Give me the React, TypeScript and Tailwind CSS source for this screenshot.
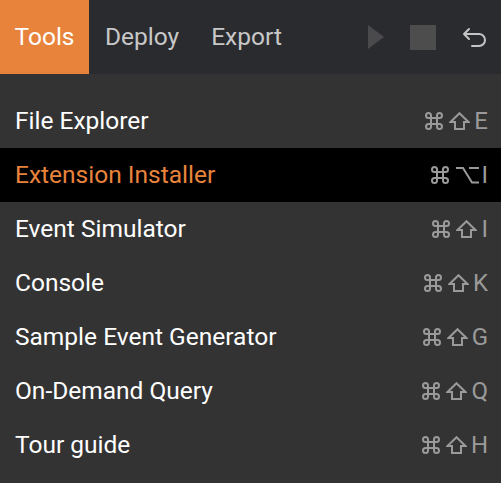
import React from 'react';

type MenuItem = {
    label: string;
    keys: string;
    active?: boolean;
};

const items: MenuItem[] = [
    { label: 'File Explorer', keys: 'E' },
    { label: 'Extension Installer', keys: 'I', active: true },
    { label: 'Event Simulator', keys: 'I' },
    { label: 'Console', keys: 'K' },
    { label: 'Sample Event Generator', keys: 'G' },
    { label: 'On-Demand Query', keys: 'Q' },
    { label: 'Tour guide', keys: 'H' },
];

const CommandIcon = () => (
    <svg width="20" height="18" viewBox="0 0 20 18" fill="none" className="mr-[5px]">
        <path
            d="M7 6 H13 V12 H7 Z M7 6 V3.5 A2.5 2.5 0 1 0 4.5 6 H7 M13 6 V3.5 A2.5 2.5 0 1 1 15.5 6 H13 M13 12 V14.5 A2.5 2.5 0 1 0 15.5 12 H13 M7 12 V14.5 A2.5 2.5 0 1 1 4.5 12 H7"
            stroke="#9a9a9a"
            strokeWidth="2"
        />
    </svg>
);

const ShiftIcon = () => (
    <svg width="21" height="18" viewBox="0 0 21 18" fill="none" className="mr-[4px]">
        <path d="M10.5 1.2 L19.5 10 H15 V17 H6 V10 H1.5 Z" stroke="#9a9a9a" strokeWidth="2" />
    </svg>
);

const OptionIcon = () => (
    <svg width="25" height="18" viewBox="0 0 25 18" fill="none" className="mr-[1px]">
        <path d="M1 2 H8 L17 16.5 H24 M14 2 H24" stroke="#9a9a9a" strokeWidth="2" />
    </svg>
);

export default function App() {
    return (
        <div className="h-[483px] w-[501px] bg-[#333333] font-['Roboto',sans-serif]">
            <header className="flex h-[74px] items-stretch bg-[#2a2b2f]">
                <button className="flex w-[89px] items-center justify-center bg-[#e8833c] text-[24.5px] text-white">
                    Tools
                </button>
                <button className="flex items-center px-4 text-[24.5px] text-[#c8c8c8]">
                    Deploy
                </button>
                <button className="flex items-center px-4 text-[24.5px] text-[#c8c8c8]">
                    Export
                </button>
                <div className="ml-auto flex items-center pr-[13px]">
                    <svg width="16" height="24" viewBox="0 0 16 24" className="mr-[26px]">
                        <polygon points="0,0 16,12 0,24" fill="#4a4a4c" />
                    </svg>
                    <div className="mr-[26px] h-[25px] w-[26px] bg-[#4d4d4d]" />
                    <svg width="26" height="20" viewBox="0 0 26 20" fill="none">
                        <path
                            d="M7 2 L2 7 L7 12 M2 7 H17 a6 6 0 0 1 0 12 H10"
                            stroke="#c4c4c4"
                            strokeWidth="2"
                            strokeLinecap="round"
                            strokeLinejoin="round"
                        />
                    </svg>
                </div>
            </header>
            <ul className="pt-5">
                {items.map((item) => (
                    <li
                        key={item.label}
                        className={`flex h-[54px] items-center justify-between pl-[15px] pr-[13px] text-[24.5px] ${
                            item.active ? 'bg-black text-[#e8833c]' : 'text-white'
                        }`}
                    >
                        <span>{item.label}</span>
                        <span className="flex items-center text-[24px] text-[#9a9a9a]">
                            <CommandIcon />
                            {item.active ? <OptionIcon /> : <ShiftIcon />}
                            <span>{item.keys}</span>
                        </span>
                    </li>
                ))}
            </ul>
        </div>
    );
}
